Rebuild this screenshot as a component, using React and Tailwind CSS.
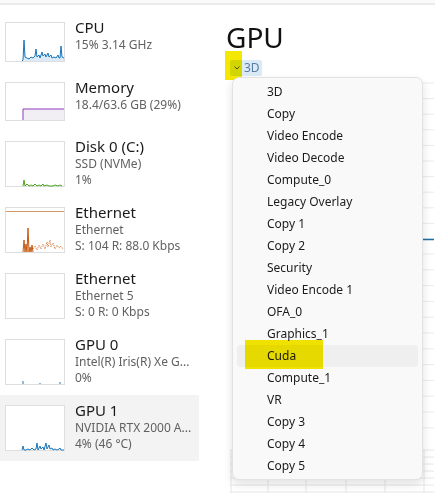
import React from "react";

const font = { fontFamily: '"Segoe UI", "Noto Sans", sans-serif' };

function Thumb({ h = 46, children }) {
  return (
    <svg width="60" height={h} className="shrink-0 block">
      <rect x="0.5" y="0.5" width="59" height={h - 1} fill="#ffffff" stroke="#dedede" />
      {children}
    </svg>
  );
}

const cpu = "M17,39 L18,38 L19,18 L20,35 L22,36 L24,37 L26,35 L28,36 L30,34 L31,27 L32,35 L34,33 L35,36 L37,30 L38,34 L40,32 L41,35 L43,31 L44,35 L46,33 L47,36 L49,35 L51,36 L53,33 L54,36 L55,36 L56,24 L57,35 L59,36";
const gpu1 = "M17,45 L18,41 L19,45 L21,45 L23,44 L25,45 L27,43 L29,45 L31,44 L32,38 L33,45 L35,41 L36,44 L38,42 L39,45 L41,38 L42,44 L44,40 L45,44 L47,43 L48,45 L50,44 L52,45 L54,44 L55,43 L56,45 L59,45";

const items = [
  "3D", "Copy", "Video Encode", "Video Decode", "Compute_0", "Legacy Overlay",
  "Copy 1", "Copy 2", "Security", "Video Encode 1", "OFA_0", "Graphics_1",
  "Cuda", "Compute_1", "VR", "Copy 3", "Copy 4", "Copy 5",
];

function Row({ h, thumbH, title, lines, selected, children }) {
  return (
    <div className={`flex gap-[10px] pl-[5px] ${selected ? "bg-[#f3f3f3]" : ""}`} style={{ height: h }}>
      <div className="pt-[10px]">
        <Thumb h={thumbH}>{children}</Thumb>
      </div>
      <div className="pt-[5px]">
        <div className="text-[15px] leading-[20px] text-[#1a1a1a]">{title}</div>
        {lines.map((l) => (
          <div key={l} className="text-[12px] leading-[16px] text-[#616161] whitespace-nowrap">{l}</div>
        ))}
      </div>
    </div>
  );
}

function Chart() {
  const h1 = [];
  for (let k = 0; k <= 10; k++) h1.push(83 + k * 15.6);
  const h2 = [];
  for (let k = 0; k <= 11; k++) h2.push(254 + k * 15.8);
  const h3 = [];
  for (let k = 0; k < 7; k++) h3.push(450 + k * 7);
  const v3 = [1, 38, 76, 116, 155, 194];
  return (
    <svg width="204" height="413" viewBox="231 80 204 413" className="block">
      {h1.map((y) => (
        <line key={"a" + y} x1="240" x2="435" y1={y} y2={y} stroke="#ebebeb" />
      ))}
      <line x1="240" x2="435" y1="239.5" y2="239.5" stroke="#1d6fa8" strokeWidth="1.5" />
      {h2.map((y) => (
        <line key={"b" + y} x1="240" x2="435" y1={y} y2={y} stroke="#ebebeb" />
      ))}
      {h3.map((y) => (
        <line key={"c" + y} x1="231" x2="435" y1={y} y2={y} stroke="#e6e6e6" />
      ))}
      {v3.map((x) => (
        <line key={"d" + x} x1={231 + x} x2={231 + x} y1="450" y2="493" stroke="#e6e6e6" />
      ))}
    </svg>
  );
}

export default function App() {
  return (
    <div className="relative h-[493px] w-[435px] overflow-hidden bg-white" style={font}>
      <div className="h-[3px] bg-[#fafafa]" />
      <div className="h-[2px] bg-[#ebebeb]" />
      <div className="flex">
        <div className="w-[199px] shrink-0 pt-[7px]">
          <Row h={60} thumbH={40} title="CPU" lines={["15%  3.14 GHz"]}>
            <path d={cpu + " L59,39 Z"} fill="#dcebf7" />
            <path d={cpu} fill="none" stroke="#1b75bb" strokeWidth="1" />
          </Row>
          <Row h={59} thumbH={39} title="Memory" lines={["18.4/63.6 GB (29%)"]}>
            <rect x="18" y="27" width="41" height="11" fill="#f1eff3" />
            <path d="M18,38 L18,27 L59,27" fill="none" stroke="#8e3bbf" strokeWidth="1" />
          </Row>
          <Row h={66} thumbH={46} title="Disk 0 (C:)" lines={["SSD (NVMe)", "1%"]}>
            <path d="M18,45 L19,39 L20,45 L22,43 L24,45 L26,44 L28,45 L30,43 L32,45 L34,44 L36,45 L38,43 L39,45 L42,44 L44,45 L48,45 L50,44 L53,45 L55,44 L57,45" fill="none" stroke="#4aa31a" strokeWidth="1" />
          </Row>
          <Row h={66} thumbH={46} title="Ethernet" lines={["Ethernet", "S: 104 R: 88.0 Kbps"]}>
            <line x1="1" x2="59" y1="4.5" y2="4.5" stroke="#d59a6c" />
            <path d="M18,45 L19,33 L20,45 L21,37 L22,45 L23,21 L24,45 L25,40 L26,45 L27,38 L28,45" fill="none" stroke="#c55a11" strokeWidth="1" />
            <path d="M28,42 L30,39 L32,43 L34,38 L36,42 L38,37 L40,42 L42,35 L43,40 L45,33 L46,40 L48,36 L50,42 L52,38 L54,41 L56,39 L58,42" fill="none" stroke="#d57a3a" strokeWidth="1" strokeDasharray="1 1" />
          </Row>
          <Row h={66} thumbH={46} title="Ethernet" lines={["Ethernet 5", "S: 0 R: 0 Kbps"]} />
          <Row h={66} thumbH={46} title="GPU 0" lines={["Intel(R) Iris(R) Xe G...", "0%"]}>
            <path d="M18,45 L18,42 M35,45 L35,44 M55,45 L55,43" fill="none" stroke="#1b75bb" strokeWidth="1" />
          </Row>
          <Row h={66} thumbH={46} selected title="GPU 1" lines={["NVIDIA RTX 2000 A...", "4%  (46 °C)"]}>
            <path d={gpu1} fill="none" stroke="#1b75bb" strokeWidth="1" />
          </Row>
        </div>

        <div className="flex-1 pl-[27px]">
          <div className="pt-[14px] text-[28px] leading-[36px] text-[#111111]">GPU</div>
          <div className="relative mt-[5px] ml-[4px] flex h-[16px] w-[32px] items-center gap-[4px] rounded-[2px] bg-[#dbeaf7] pl-[4px]">
            <svg width="6" height="4" viewBox="0 0 6 4">
              <path d="M0.5,0.5 L3,3 L5.5,0.5" fill="none" stroke="#555" strokeWidth="1" />
            </svg>
            <span className="text-[12px] leading-[16px] text-[#5a7ca3]">3D</span>
            <div className="absolute left-[-5px] top-[-9px] h-[29px] w-[17px] bg-[#f5e800] mix-blend-multiply" />
          </div>
          <div className="mt-[4px] ml-[4px]">
            <Chart />
          </div>
        </div>
      </div>

      <div className="absolute left-[232px] top-[77px] h-[403px] w-[191px] rounded-[7px] border border-[#e2e2e2] bg-[#f9f9f9] pt-[3px] shadow-[0_4px_10px_rgba(0,0,0,0.12)]">
        {items.map((it) => (
          <div
            key={it}
            className={`relative mx-[4px] flex h-[22px] items-center rounded-[4px] pl-[30px] text-[12px] text-[#1b1b1b] ${it === "Cuda" ? "bg-[#efefef]" : ""}`}
          >
            {it}
            {it === "Cuda" && (
              <div className="absolute left-[8px] top-[-5px] h-[29px] w-[78px] bg-[#f5e800] mix-blend-multiply" />
            )}
          </div>
        ))}
      </div>
    </div>
  );
}
